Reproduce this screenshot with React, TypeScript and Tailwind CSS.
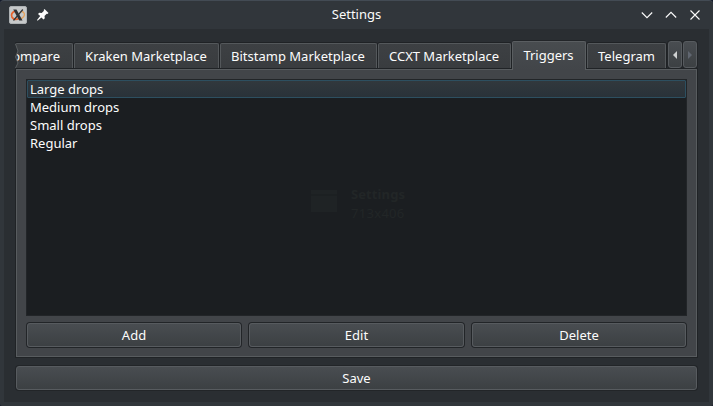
import type { ReactNode } from 'react';

function Tab({ label, className }: { label: string; className: string }) {
  return (
    <div
      className={`mb-px flex h-[25px] shrink-0 items-center justify-center rounded-t-[2px] border border-b-0 border-[#54585b] bg-linear-to-b from-[#3d4043] to-[#393c3f] pb-px whitespace-nowrap shadow-[0_0_0_1px_#1f2225] ${className}`}
    >
      {label}
    </div>
  );
}

function Button({ children, className }: { children: ReactNode; className: string }) {
  return (
    <button
      className={`flex items-center justify-center rounded-[3px] border border-[#575b5f] bg-linear-to-b from-[#494d51] to-[#3c4043] shadow-[0_0_0_1px_#222528] ${className}`}
    >
      {children}
    </button>
  );
}

const triggers = ['Medium drops', 'Small drops', 'Regular'];

export default function App() {
  return (
    <div className="h-[406px] w-[713px] overflow-hidden bg-[#141a2a] font-['Noto_Sans',sans-serif] text-[13px] leading-[18px] text-[#fcfcfc]">
      <div className="flex h-full flex-col rounded-t-[4px] rounded-b-[2px] border-t border-[#434b54] bg-[#31363b] px-1 pb-1">
        <header className="grid h-7 shrink-0 grid-cols-[1fr_auto_1fr] items-center">
          <div className="flex items-center gap-[10px] pb-px pl-[5px]">
            <svg width="18" height="18" viewBox="0 0 18 18">
              <rect x=".5" y=".5" width="17" height="17" rx="1.5" fill="#c6c9ca" stroke="#aeb2b4" />
              <path d="M6.500 5.200C3 6 1.700 8.500 3 11.200c1.200 2 4 2.400 6.500 1.700" fill="none" stroke="#e9622b" strokeWidth="1.700" />
              <path d="M12.500 5.500c3 .5 3.700 3 2.200 5.200-1.200 1.700-2.500 2-4 2.300" fill="none" stroke="#e6a15b" strokeWidth="1.300" />
              <path d="M13.800 3.500 4.500 14.500" stroke="#303234" strokeWidth="1.200" />
              <path d="M4.200 3.500h3.300l6 11h-3.300z" fill="#303234" />
            </svg>
            <svg width="12" height="12" viewBox="0 0 12 12" fill="#fcfcfc">
              <path d="m7.500 0 4 4-1.100 1-.7-.2-2.200 2.300.3 2.200L6.500 10.500 4.400 8.400.6 11.700 0 11l3.200-3.900L1 5l1.300-1.200 2.400.2L7 1.700l-.3-.8z" />
            </svg>
          </div>
          <h1 className="pb-[2px]">Settings</h1>
          <div className="flex items-center justify-end gap-3 pr-2 pb-px">
            <svg width="12" height="12" viewBox="0 0 12 12" fill="none" stroke="#fcfcfc" strokeWidth="1.100"><path d="m.8 3.500 5.200 5.200 5.200-5.200" /></svg>
            <svg width="12" height="12" viewBox="0 0 12 12" fill="none" stroke="#fcfcfc" strokeWidth="1.100"><path d="m.8 8.500 5.200-5.200 5.200 5.200" /></svg>
            <svg width="12" height="12" viewBox="0 0 12 12" fill="none" stroke="#fcfcfc" strokeWidth="1.100"><path d="m1.500 1.500 9 9m0-9-9 9" /></svg>
          </div>
        </header>

        <main className="flex min-h-0 flex-1 flex-col bg-[#2a2e32] px-3 pt-3">
          <nav className="flex h-7 shrink-0 items-end">
            <div className="relative -ml-px flex h-7 w-[58px] shrink-0 items-end overflow-hidden">
              <Tab label="ompare" className="w-[58px] justify-end border-l-0 pr-3 pl-0" />
              <svg className="absolute top-[2px] left-0" width="4" height="26" viewBox="0 0 4 26">
                <path d="M-1 0v26h1.500l2.500-6L.5 14 3 8 .5 1z" fill="#2a2e32" />
                <path d="m.5 1 2.500 7-2.500 6L3 20 .5 25" fill="none" stroke="#5b5f62" />
              </svg>
            </div>
            <div className="flex h-7 items-end gap-px pl-px">
              <Tab label="Kraken Marketplace" className="w-[145px] pr-px" />
              <Tab label="Bitstamp Marketplace" className="w-[157px] pr-px" />
              <Tab label="CCXT Marketplace" className="w-[133px] pr-px" />
            </div>
            <div className="relative z-10 -mb-px ml-px flex h-[29px] w-[74px] shrink-0 items-start justify-center rounded-t-[2px] border border-b-0 border-[#5a5e61] bg-linear-to-b from-[#484c4f] to-[#424549] pt-[4px] pr-px shadow-[0_-1px_0_#222528]">
              Triggers
            </div>
            <Tab label="Telegram" className="ml-px w-[79px]" />
            <div className="mb-px ml-[2px] flex gap-px">
              <Button className="h-[27px] w-[14px]">
                <svg width="4" height="8" viewBox="0 0 4 8"><path d="M4 0v8L0 4z" fill="#cfd1d2" /></svg>
              </Button>
              <Button className="h-[27px] w-[14px]">
                <svg width="4" height="8" viewBox="0 0 4 8"><path d="M0 0v8l4-4z" fill="#606670" /></svg>
              </Button>
            </div>
          </nav>

          <section className="flex h-[288px] shrink-0 flex-col border border-[#585c5f] bg-[#424549] px-[9px] pt-[9px] shadow-[0_0_0_1px_#202326]">
            <div className="relative flex h-[237px] w-[661px] shrink-0 flex-col border border-[#222528] bg-[#1b1e21]">
              <div className="flex h-[18px] items-center rounded-[1px] border border-[#2d4f60] bg-linear-to-b from-[#31383d] to-[#293239] pl-[2px]">Large drops</div>
              {triggers.map((trigger) => (
                <div key={trigger} className="h-[18px] pl-[3px]">{trigger}</div>
              ))}
              <div className="absolute top-[105px] left-[283px] flex items-center gap-[13px] text-[#222627]">
                <svg className="-mt-[6px]" width="28" height="24" viewBox="0 0 28 24"><path d="M1 1h26v22H1z" fill="#1f2325" /><path d="M1 6h26" stroke="#1b1e20" /></svg>
                <div className="leading-[19px]">
                  <div className="font-bold tracking-[.1px]">Settings</div>
                  <div className="tracking-[.3px]">713x406</div>
                </div>
              </div>
            </div>
            <div className="mt-[7px] flex gap-2 px-px">
              <Button className="h-6 w-[214px]">Add</Button>
              <Button className="h-6 w-[215px]">Edit</Button>
              <Button className="h-6 w-[214px]">Delete</Button>
            </div>
          </section>
          <Button className="mt-[9px] h-6 w-[681px]">Save</Button>
        </main>
      </div>
    </div>
  );
}
